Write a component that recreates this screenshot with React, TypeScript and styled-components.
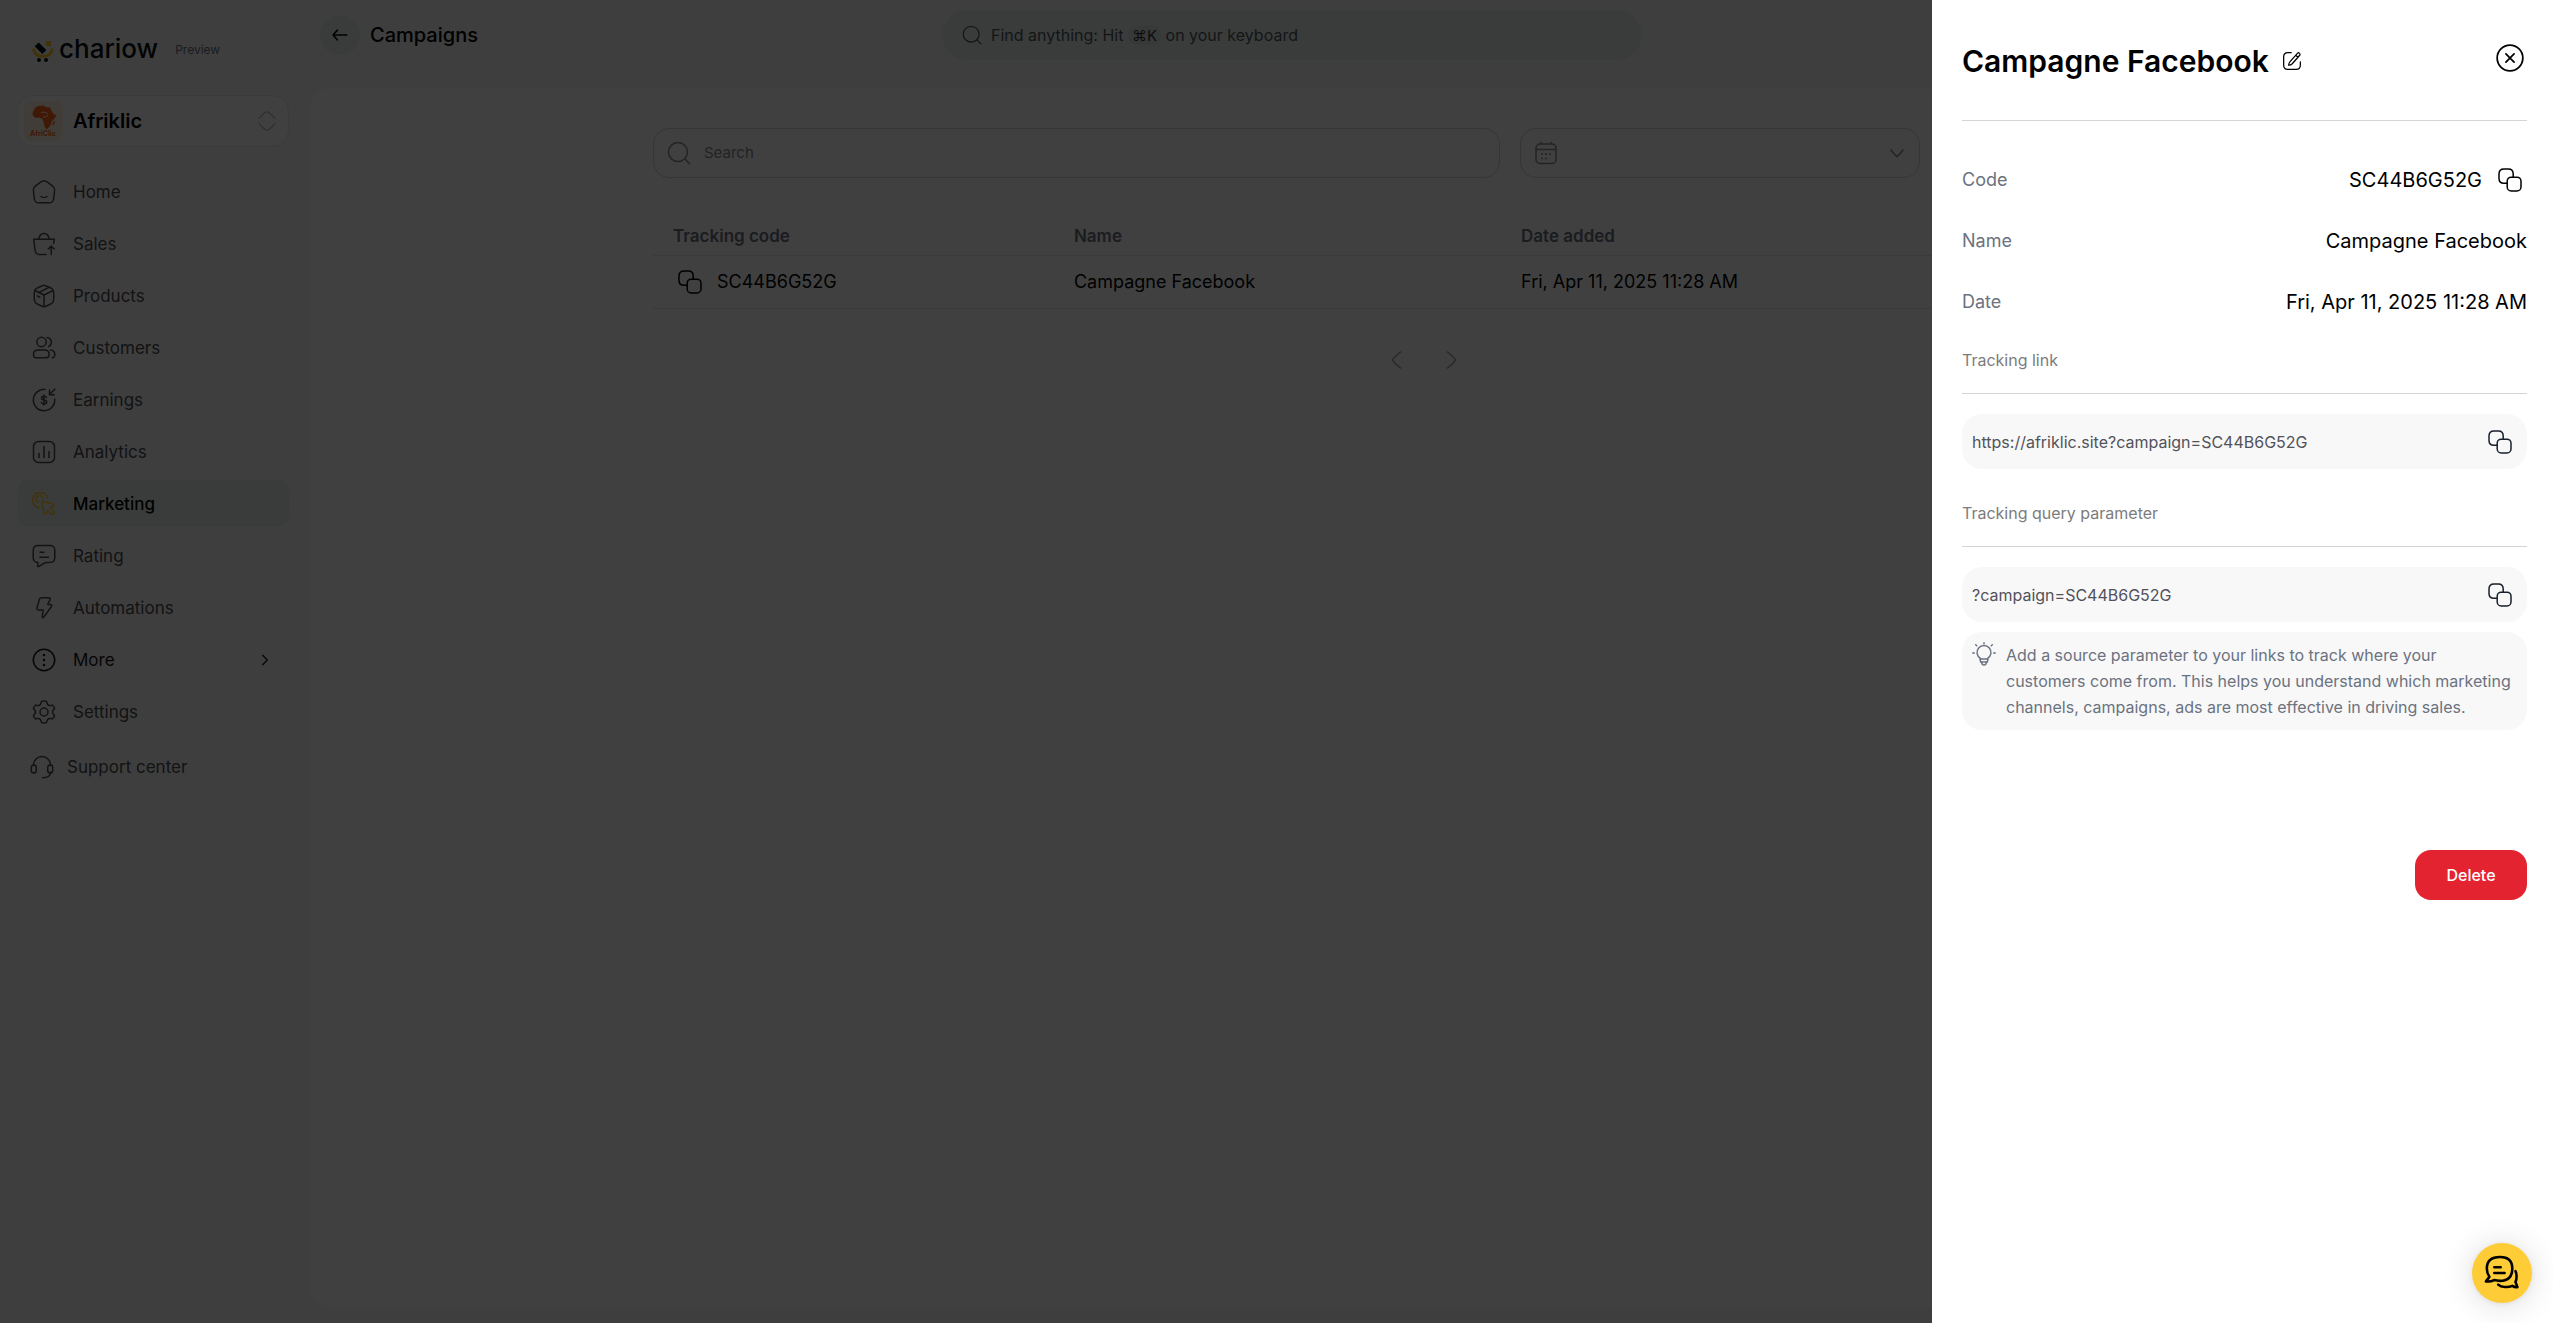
import React from "react";
import styled, { createGlobalStyle } from "styled-components";

const GlobalStyle = createGlobalStyle`
  *, *::before, *::after { box-sizing: border-box; }
  body {
    margin: 0;
    background: #f8f8f8;
    color: #000;
    font-family: Inter, "Liberation Sans", sans-serif;
    font-size: 16px;
    line-height: 24px;
  }
  button, input { font: inherit; color: inherit; }
  button { margin: 0; padding: 0; border: 0; background: none; cursor: pointer; }
  a { color: inherit; text-decoration: none; }
  svg { display: block; flex: none; }
`;

/* ---------- icons ---------- */

const icons = {
  home: (
    <>
      <path d="M1.500 11.500c-.4-3-.2-3.700 1.800-5.300l5.200-4C10.400.9 11 .8 12 .8s1.600.1 3.500 1.400l5.200 4c2 1.600 2.200 2.300 1.800 5.300l-.7 6.300c-.4 3.600-1.300 5-4.800 5H7c-3.500 0-4.400-1.400-4.800-5z" />
      <path d="M9 16.500c1.600 1.300 4.400 1.300 6 0" />
    </>
  ),
  sales: (
    <>
      <path d="M21.500 11.500l.8-4.200H1.700L3 17.500c.6 3.700 1.200 5 4.500 5H14" />
      <path d="M7 7c.3-3 2-5.500 5-5.500S16.700 4 17 7M19.200 22.500v-8M16.300 17l2.900-2.900 2.900 2.900" />
    </>
  ),
  products: (
    <>
      <path d="M12 1.200c-1 0-7.300 3-8.300 3.800-1.300 1-1.500 1.800-1.500 7s.2 6 1.500 7c1 .8 7.300 3.800 8.300 3.800s7.300-3 8.300-3.800c1.300-1 1.500-1.800 1.500-7s-.2-6-1.500-7c-1-.8-7.300-3.800-8.300-3.800z" />
      <path d="M2.800 6.500 12 11l9.200-4.500M12 11v11.600M6.800 8.600l10-5.300M5.500 12l2.500 1.300" />
    </>
  ),
  customers: (
    <>
      <circle cx="9.500" cy="6" r="4.700" />
      <path d="M15 1.500a4.700 4.700 0 0 1 1.500 9M1.500 18.300c0-2.600 1.800-4.200 4.800-4.200h6c3 0 4.800 1.600 4.800 4.200 0 2.300-.8 3.500-3 3.500H4.500c-2.200 0-3-1.200-3-3.500zM18.500 14.100c2.700.3 4.100 1.800 4.300 4.200.1 2.100-.8 3.500-2.700 3.500" />
    </>
  ),
  earnings: (
    <>
      <path d="M13 1.400A10.700 10.700 0 1 0 22.700 11" />
      <path d="M23 1 17.500 6.500m0-4.500v4.700h4.700M14.500 9.500C14 8.500 13 8.300 12 8.300c-1.500 0-2.500.8-2.500 1.900 0 2.600 5.200 1 5.200 3.700 0 1.200-1.100 2-2.700 2-1.300 0-2.300-.4-2.700-1.500M12 7v10" />
    </>
  ),
  analytics: (
    <>
      <rect x="1.500" y="1.500" width="21" height="21" rx="5" />
      <path d="M7 17.500v-4M12 17.500v-11M17 17.500v-6" />
    </>
  ),
  marketing: (
    <>
      <path d="M7 15.700A7.700 7.700 0 1 1 15.800 6.500" />
      <path d="M6.200 10.300a3.500 3.500 0 1 1 4.600-4.100M11.500 9.500l9.500 2.500c1.500.5 1.500 2 0 2.500l-1.700.8c-.8.4-.8.900-.2 1.500l3 3c1.200 1.200-1.200 3.600-2.400 2.400l-3-3c-.6-.6-1.200-.5-1.500.3l-.8 1.700c-.6 1.400-2 1.500-2.400 0L10 11.200c-.3-1.100.4-2 1.500-1.700z" />
    </>
  ),
  rating: (
    <>
      <path d="M6.500 1.500h11c4 0 5.300 1.400 5.300 5.200v6.600c0 3.800-1.300 5.200-5.300 5.200h-3c-2.500 0-4.500 2.500-8 4-.8.3-1-.2-.9-.9l.4-3.100c-3.500-.2-4.800-1.400-4.800-5.200V6.700c0-3.800 1.300-5.200 5.300-5.200z" />
      <path d="M8 8.300h4M8 13.300h8.500" />
    </>
  ),
  automations: (
    <path d="M9.500 1.700h7.200c1.500 0 2 .7 1.300 2L15.700 8.500h2.200c2 0 2.300 1 1.400 2.200L12 20.700c-1.200 1.600-2 1.300-1.700-.7l.9-6H7c-2 0-2.400-.8-1.900-2.600L7.300 3.500c.4-1.300 1-1.800 2.200-1.800z" />
  ),
  more: (
    <>
      <circle cx="12" cy="12" r="10.700" />
      <path d="M12 7v.02M12 12v.02M12 17v.02" strokeWidth="2.500" />
    </>
  ),
  settings: (
    <>
      <path d="M22 7.100l-.5-.8c-.4-.7-.6-1-.9-1.100-.4-.1-.8 0-1.500.2-2 .5-3.500-.3-3.900-2l-.3-.8c-.2-.7-.3-1-.6-1.200-.4-.3-.7-.3-1.400-.3h-1.800c-.7 0-1 0-1.400.3-.3.200-.4.500-.6 1.200l-.3.800c-.4 1.700-1.900 2.500-3.900 2-.7-.2-1.100-.3-1.500-.2-.3.100-.5.400-.9 1.100l-.5.800c-.3.600-.5.900-.5 1.300.1.300.3.600.8 1.100 1.500 1.500 1.500 3.500 0 5-.5.500-.7.800-.8 1.100 0 .4.200.7.500 1.300l.5.800c.4.700.6 1 .9 1.100.4.100.8 0 1.500-.2 2-.5 3.500.3 3.900 2l.3.800c.2.700.3 1 .6 1.200.4.300.7.300 1.400.3h1.800c.7 0 1 0 1.400-.3.300-.2.400-.5.600-1.200l.3-.8c.4-1.700 1.900-2.500 3.900-2 .7.200 1.100.3 1.500.2.300-.1.500-.4.900-1.100l.5-.8c.3-.6.500-.9.500-1.300-.1-.3-.3-.6-.8-1.100-1.500-1.500-1.500-3.500 0-5 .5-.5.700-.8.800-1.100 0-.4-.2-.7-.5-1.300z" />
      <circle cx="12" cy="12" r="4" />
    </>
  ),
  support: (
    <>
      <path d="M3.500 10.500V10a8.500 8.500 0 0 1 17 0v.5M20.500 17c0 4-2 5.700-8 5.700" />
      <rect x="1.300" y="10" width="5" height="8" rx="2.500" />
      <rect x="17.700" y="10" width="5" height="8" rx="2.500" />
    </>
  ),
  back: <path d="M3 12h18M8.500 5.500c-2.300 2.500-3.800 4.200-5.700 6.500 1.900 2.300 3.400 4 5.700 6.500" />,
  search: (
    <>
      <circle cx="11" cy="11" r="9.500" />
      <path d="m18 18 4.700 4.700" />
    </>
  ),
  calendar: (
    <>
      <rect x="2" y="3" width="20" height="19.500" rx="4" />
      <path d="M7 1.200v1.500M17 1.200v1.500M2.500 8.500h19" />
      <path d="M8 13v.02M12 13v.02M16 13v.02M8 17.500v.02M12 17.500v.02" strokeWidth="2" />
    </>
  ),
  down: <path d="M4 8c2.800 4 5 6.500 8 9 3-2.500 5.200-5 8-9" />,
  left: <path d="M16.500 4c-4 3-6.500 5-8 8 1.500 3 4 5 8 8" />,
  right: <path d="M7.500 4c4 3 6.500 5 8 8-1.500 3-4 5-8 8" />,
  chevron: <path d="m8.500 5 7 7-7 7" />,
  sort: <path d="M2.500 9c2-2.700 4.500-5.200 6.700-7 1.600-1.200 4-1.200 5.600 0 2.200 1.800 4.700 4.300 6.700 7M2.500 15c2 2.700 4.500 5.200 6.700 7 1.600 1.200 4 1.200 5.600 0 2.200-1.800 4.700-4.300 6.700-7" />,
  copy: (
    <>
      <rect x="9.200" y="9.200" width="13.800" height="13.800" rx="4" />
      <path d="M9 15.200H6c-3.600 0-5-1.200-5-4.800V6c0-3.600 1.400-5 5-5h4.400c3.600 0 4.800 1.400 4.800 5v3" />
    </>
  ),
  edit: (
    <>
      <path d="M11 2H7C3.300 2 2 3.300 2 7v10c0 3.700 1.300 5 5 5h10c3.700 0 5-1.300 5-5v-4" />
      <path d="M19 2.300c1-.9 3.400 1.400 2.500 2.500l-9.200 10.500c-1.200 1.200-2.600 1.700-4.300 1.800.1-1.700.5-3.200 1.700-4.400zM16.500 5l2.500 2.500" />
    </>
  ),
  close: (
    <>
      <circle cx="12" cy="12" r="11" />
      <path d="m8.500 8.500 7 7m0-7-7 7" />
    </>
  ),
  bulb: (
    <>
      <path d="M8.500 16.500a7 7 0 1 1 7 0M8 17h8l-.7 3H8.700zM9.700 20.500c.2 1.800 1 2.500 2.300 2.500s2.100-.7 2.300-2.500M12 .8v1M.8 11h1.500M21.700 11h1.500M3.700 2.700l1 1M20.300 2.700l-1 1" />
    </>
  ),
  chat: (
    <>
      <path d="M12.500 1.500c-6.500 0-10.300 3-10.300 9 0 2.500.8 4.800 2 6.500L1.500 20.500c2.500.4 4.500 0 6.300-1 1.500.4 3 .6 4.700.6 6.500 0 9.500-3.600 9.500-9.600s-3-9-9.500-9z" />
      <path d="M8 9.500h5M8 14h8M24.500 12.500c1 1.800 1.200 6 0 8.500l1.500 4c-1.800.2-2.800-.2-4-1-3 1.300-8.500 1.300-11-1" />
    </>
  ),
};

type IconProps = { name: keyof typeof icons; size?: number; weight?: number; box?: number };

const Icon = ({ name, size = 24, weight = 1.5, box = 24 }: IconProps) => (
  <svg
    width={size}
    height={size}
    viewBox={`0 0 ${box} ${box}`}
    fill="none"
    stroke="currentColor"
    strokeWidth={weight}
    strokeLinecap="round"
    strokeLinejoin="round"
    aria-hidden="true"
  >
    {icons[name]}
  </svg>
);

const LogoMark = () => (
  <svg width="22" height="26" viewBox="0 0 22 26" aria-hidden="true">
    <path d="M1.500 11.500c.5 5.500 4.500 7.700 9.400 7.700s8.900-2.200 9.400-7.700" fill="none" stroke="#ffcb2d" strokeWidth="3" />
    <rect x="14" y="4" width="5" height="5" fill="#ffcb2d" />
    <path d="M6.700 5.500l7.700 7.500-4.100 4L2.700 9.200z" fill="#061210" />
    <circle cx="7" cy="23" r="2" fill="#061210" />
    <circle cx="14" cy="23" r="2" fill="#061210" />
  </svg>
);

const StoreLogo = () => (
  <svg width="39" height="40" viewBox="0 0 39 40" role="img" aria-label="Store logo">
    <rect width="39" height="40" rx="8" fill="#fff1e2" />
    <path
      d="M11 7l3-2 6-.5 1.500 1.500 4.500.5 2 4 2 3 2.500.5-1.500 3-3.500 3.500-.5 3-2 2.500-1.500 2-2-.5-1.500-3.500-.5-3-1-3-3-1.500-4 .5-3-3 .5-3.500z"
      fill="#f96515"
    />
    <path d="M29 21l1.500-1.500.3 2-1.300 3-1-.5z" fill="#f96515" />
    <path d="M17 12c2-1.500 5-1 7 1M19 16c2 0 4 0 5-2" stroke="#fff1e2" fill="none" />
    <text x="6" y="35" fontSize="7" fontWeight="700" fill="#f96515">
      AfriClic
    </text>
  </svg>
);

/* ---------- sidebar ---------- */

const Shell = styled.div`
  display: flex;
  min-height: 100vh;
`;

const Sidebar = styled.aside`
  flex: none;
  width: 310px;
  padding: 35px 21px 24px 17px;
`;

const Brand = styled.div`
  display: flex;
  align-items: center;
  height: 30px;
  padding-left: 15px;
`;

const BrandName = styled.span`
  margin: 0 6px 2px 5px;
  color: #061210;
  font-size: 26px;
  line-height: 30px;
  font-weight: 500;
`;

const Badge = styled.span`
  padding: 0 10px;
  border: 1px solid #f1f1f1;
  border-radius: 15px;
  color: #6b7280;
  font-size: 12px;
  line-height: 28px;
`;

const StoreButton = styled.button`
  display: flex;
  align-items: center;
  gap: 10px;
  width: 100%;
  height: 52px;
  margin: 30px 0 21px;
  padding: 0 11px 0 6px;
  border: 1px solid #e5e7eb;
  border-radius: 16px;
  background: #fff;
  text-align: left;
`;

const StoreName = styled.span`
  flex: 1;
  font-size: 20px;
  font-weight: 600;
`;

const Muted = styled.span`
  color: #b4b6ba;
`;

const NavList = styled.ul`
  display: grid;
  gap: 5px;
  margin: 0;
  padding: 0;
  list-style: none;
`;

const NavLink = styled.a<{ $active?: boolean; $strong?: boolean }>`
  display: flex;
  align-items: center;
  gap: 17px;
  height: 47px;
  padding: 0 16px 0 15px;
  border-radius: 10px;
  background: ${(p) => (p.$active ? "#e8f0ee" : "transparent")};
  color: ${(p) => (p.$active ? "#000" : p.$strong ? "#18181b" : "#4b4b4f")};
  font-size: 17px;
  font-weight: ${(p) => (p.$active ? 500 : 400)};

  svg:first-child { color: ${(p) => (p.$active ? "#ffc629" : "inherit")}; }
`;

const NavLabel = styled.span`
  flex: 1;
`;

const SupportLink = styled(NavLink)`
  gap: 13px;
  margin-top: 8px;
  padding-left: 13px;
`;

const navItems: { icon: keyof typeof icons; label: string }[] = [
  { icon: "home", label: "Home" },
  { icon: "sales", label: "Sales" },
  { icon: "products", label: "Products" },
  { icon: "customers", label: "Customers" },
  { icon: "earnings", label: "Earnings" },
  { icon: "analytics", label: "Analytics" },
  { icon: "marketing", label: "Marketing" },
  { icon: "rating", label: "Rating" },
  { icon: "automations", label: "Automations" },
  { icon: "more", label: "More" },
  { icon: "settings", label: "Settings" },
];

/* ---------- main ---------- */

const Main = styled.main`
  display: flex;
  flex: 1;
  flex-direction: column;
  min-width: 0;
  padding: 10px 15px 15px 0;
`;

const TopBar = styled.header`
  display: grid;
  grid-template-columns: minmax(180px, 622px) minmax(320px, 700px) 1fr;
  align-items: center;
  height: 50px;
  margin-bottom: 28px;
  padding-left: 10px;
`;

const PageHeading = styled.div`
  display: flex;
  align-items: center;
  gap: 10px;
`;

const BackButton = styled.button`
  display: grid;
  place-items: center;
  width: 40px;
  height: 40px;
  border-radius: 50%;
  background: #e8f0ee;
`;

const PageTitle = styled.h1`
  margin: 0;
  font-size: 20px;
  line-height: 28px;
  font-weight: 500;
`;

const CommandButton = styled.button`
  display: flex;
  align-items: center;
  gap: 9px;
  height: 50px;
  padding: 0 20px;
  border-radius: 25px;
  background: #e8f0ee;
  color: #52565c;
`;

const Kbd = styled.kbd`
  padding: 0 4px;
  border-radius: 8px;
  background: #dbe3e1;
  color: #33373c;
  font-family: inherit;
  font-size: 15px;
  line-height: 20px;
`;

const Panel = styled.section`
  flex: 1;
  padding: 39px 24px;
  border: 1px solid #fbfbfb;
  border-radius: 18px;
  background: #fff;
`;

const Container = styled.div`
  max-width: 1542px;
  margin: 0 auto;
`;

const Filters = styled.div`
  display: grid;
  grid-template-columns: 847fr 400fr 255fr;
  gap: 20px;
`;

const Field = styled.label`
  display: flex;
  align-items: center;
  gap: 13px;
  height: 50px;
  padding: 0 13px;
  border: 1px solid #d1d5db;
  border-radius: 16px;
  color: #8a8d93;
`;

const FieldInput = styled.input`
  flex: 1;
  min-width: 0;
  padding: 0;
  border: 0;
  outline: 0;
  background: none;
  font-size: 15px;

  &::placeholder { color: #8a8d93; opacity: 1; }
`;

const Table = styled.table`
  width: 100%;
  margin-top: 40px;
  border-collapse: collapse;
  table-layout: fixed;
`;

const HeadCell = styled.th<{ $width?: string }>`
  width: ${(p) => p.$width ?? "auto"};
  height: 37px;
  padding: 0 20px;
  border-bottom: 1px solid #e5e7eb;
  color: #6b7280;
  font-size: 17px;
  font-weight: 600;
  text-align: left;
`;

const Cell = styled.td`
  height: 53px;
  padding: 0 20px;
  border-bottom: 1px solid #e5e7eb;
  font-size: 18px;
`;

const CodeCell = styled.div`
  display: flex;
  align-items: center;
  gap: 15px;
  padding-left: 5px;
`;

const CopyButton = styled.button`
  display: grid;
  place-items: center;
  width: 24px;
  height: 24px;
`;

const Pager = styled.nav`
  display: flex;
  justify-content: center;
  gap: 32px;
  padding-top: 39px;
  color: #9a9da3;
`;

/* ---------- drawer ---------- */

const Overlay = styled.div`
  position: fixed;
  inset: 0;
  background: rgba(0, 0, 0, 0.75);
`;

const Drawer = styled.section`
  position: fixed;
  inset: 0 0 0 auto;
  width: 621px;
  max-width: 100%;
  padding: 38px 26px 30px 30px;
  overflow: auto;
  background: #fff;
`;

const DrawerHeader = styled.header`
  display: flex;
  align-items: flex-start;
  justify-content: space-between;
  height: 83px;
  padding-right: 3px;
  border-bottom: 1px solid #d4d4d8;
`;

const DrawerHeading = styled.div`
  display: flex;
  align-items: center;
  gap: 13px;
`;

const DrawerTitle = styled.h2`
  margin: 0;
  font-size: 30px;
  line-height: 46px;
  font-weight: 600;
`;

const IconButton = styled.button`
  display: grid;
  place-items: center;
  padding: 6px 0;
`;

const Details = styled.dl`
  display: grid;
  gap: 36px;
  margin: 46px 0 34px;
`;

const Detail = styled.div`
  display: flex;
  align-items: center;
  justify-content: space-between;
  height: 25px;
`;

const Term = styled.dt`
  color: #6b7280;
  font-size: 18px;
`;

const Value = styled.dd`
  display: flex;
  align-items: center;
  gap: 16px;
  margin: 0;
  font-size: 20px;
`;

const DetailCopy = styled(CopyButton)`
  margin-right: 5px;
`;

const Group = styled.section`
  margin-bottom: 32px;
`;

const GroupTitle = styled.h3`
  margin: 0 0 20px;
  padding-bottom: 21px;
  border-bottom: 1px solid #d4d4d8;
  color: #7c7c7c;
  font-size: 16px;
  line-height: 24px;
  font-weight: 400;
`;

const Snippet = styled.div`
  display: flex;
  align-items: center;
  justify-content: space-between;
  height: 55px;
  padding: 0 15px 0 10px;
  border-radius: 20px;
  background: #f8f8f8;
  color: #52525b;
`;

const SnippetCopy = styled(CopyButton)`
  color: #18202c;
`;

const Hint = styled.div`
  display: flex;
  gap: 10px;
  margin-top: 10px;
  padding: 10px;
  border-radius: 20px;
  background: #f8f8f8;
  color: #6b7280;
  line-height: 26px;
`;

const HintText = styled.p`
  margin: 0;
`;

const Actions = styled.div`
  display: flex;
  justify-content: flex-end;
  padding-top: 88px;
`;

const DeleteButton = styled.button`
  width: 112px;
  height: 50px;
  border-radius: 16px;
  background: #e32430;
  color: #fff;
  font-weight: 500;
`;

const ChatButton = styled.button`
  position: fixed;
  right: 21px;
  bottom: 20px;
  display: grid;
  place-items: center;
  width: 60px;
  height: 60px;
  border-radius: 50%;
  background: #fdcc36;
  box-shadow: 0 1px 6px rgba(0, 0, 0, 0.08), 0 2px 32px rgba(0, 0, 0, 0.14);
`;

export default function App() {
  return (
    <>
      <GlobalStyle />
      <Shell>
        <Sidebar>
          <Brand>
            <LogoMark />
            <BrandName>chariow</BrandName>
            <Badge>Preview</Badge>
          </Brand>
          <StoreButton type="button">
            <StoreLogo />
            <StoreName>Afriklic</StoreName>
            <Muted>
              <Icon name="sort" size={20} />
            </Muted>
          </StoreButton>
          <nav aria-label="Main">
            <NavList>
              {navItems.map(({ icon, label }) => (
                <li key={label}>
                  <NavLink href="#" $active={label === "Marketing"} $strong={label === "More"}>
                    <Icon name={icon} />
                    <NavLabel>{label}</NavLabel>
                    {label === "More" && <Icon name="chevron" size={16} weight={2} />}
                  </NavLink>
                </li>
              ))}
            </NavList>
          </nav>
          <SupportLink href="#">
            <Icon name="support" />
            <NavLabel>Support center</NavLabel>
          </SupportLink>
        </Sidebar>

        <Main>
          <TopBar>
            <PageHeading>
              <BackButton type="button" aria-label="Back">
                <Icon name="back" size={18} weight={2} />
              </BackButton>
              <PageTitle>Campaigns</PageTitle>
            </PageHeading>
            <CommandButton type="button">
              <Icon name="search" size={20} />
              <span>
                Find anything: Hit <Kbd>⌘K</Kbd> on your keyboard
              </span>
            </CommandButton>
          </TopBar>

          <Panel>
            <Container>
              <Filters>
                <Field>
                  <Icon name="search" />
                  <FieldInput type="search" placeholder="Search" aria-label="Search" />
                </Field>
                <Field>
                  <Icon name="calendar" />
                  <FieldInput type="text" aria-label="Date range" />
                  <Icon name="down" size={18} weight={2} />
                </Field>
              </Filters>
              <Table>
                <thead>
                  <tr>
                    <HeadCell $width="26%">Tracking code</HeadCell>
                    <HeadCell $width="29%">Name</HeadCell>
                    <HeadCell>Date added</HeadCell>
                  </tr>
                </thead>
                <tbody>
                  <tr>
                    <Cell>
                      <CodeCell>
                        <CopyButton type="button" aria-label="Copy tracking code">
                          <Icon name="copy" />
                        </CopyButton>
                        SC44B6G52G
                      </CodeCell>
                    </Cell>
                    <Cell>Campagne Facebook</Cell>
                    <Cell>Fri, Apr 11, 2025 11:28 AM</Cell>
                  </tr>
                </tbody>
              </Table>
              <Pager aria-label="Pagination">
                <button type="button" aria-label="Previous page">
                  <Icon name="left" />
                </button>
                <button type="button" aria-label="Next page">
                  <Icon name="right" />
                </button>
              </Pager>
            </Container>
          </Panel>
        </Main>
      </Shell>

      <Overlay />

      <Drawer role="dialog" aria-label="Campaign details">
        <DrawerHeader>
          <DrawerHeading>
            <DrawerTitle>Campagne Facebook</DrawerTitle>
            <button type="button" aria-label="Edit campaign">
              <Icon name="edit" size={20} />
            </button>
          </DrawerHeading>
          <IconButton type="button" aria-label="Close">
            <Icon name="close" size={28} />
          </IconButton>
        </DrawerHeader>

        <Details>
          <Detail>
            <Term>Code</Term>
            <Value>
              SC44B6G52G
              <DetailCopy type="button" aria-label="Copy code">
                <Icon name="copy" />
              </DetailCopy>
            </Value>
          </Detail>
          <Detail>
            <Term>Name</Term>
            <Value>Campagne Facebook</Value>
          </Detail>
          <Detail>
            <Term>Date</Term>
            <Value>Fri, Apr 11, 2025 11:28 AM</Value>
          </Detail>
        </Details>

        <Group>
          <GroupTitle>Tracking link</GroupTitle>
          <Snippet>
            <span>https://afriklic.site?campaign=SC44B6G52G</span>
            <SnippetCopy type="button" aria-label="Copy tracking link">
              <Icon name="copy" />
            </SnippetCopy>
          </Snippet>
        </Group>

        <Group>
          <GroupTitle>Tracking query parameter</GroupTitle>
          <Snippet>
            <span>?campaign=SC44B6G52G</span>
            <SnippetCopy type="button" aria-label="Copy query parameter">
              <Icon name="copy" />
            </SnippetCopy>
          </Snippet>
          <Hint>
            <Icon name="bulb" />
            <HintText>
              Add a source parameter to your links to track where your customers come from. This helps you understand
              which marketing channels, campaigns, ads are most effective in driving sales.
            </HintText>
          </Hint>
        </Group>

        <Actions>
          <DeleteButton type="button">Delete</DeleteButton>
        </Actions>
      </Drawer>

      <ChatButton type="button" aria-label="Open chat">
        <Icon name="chat" size={36} weight={2} box={28} />
      </ChatButton>
    </>
  );
}
